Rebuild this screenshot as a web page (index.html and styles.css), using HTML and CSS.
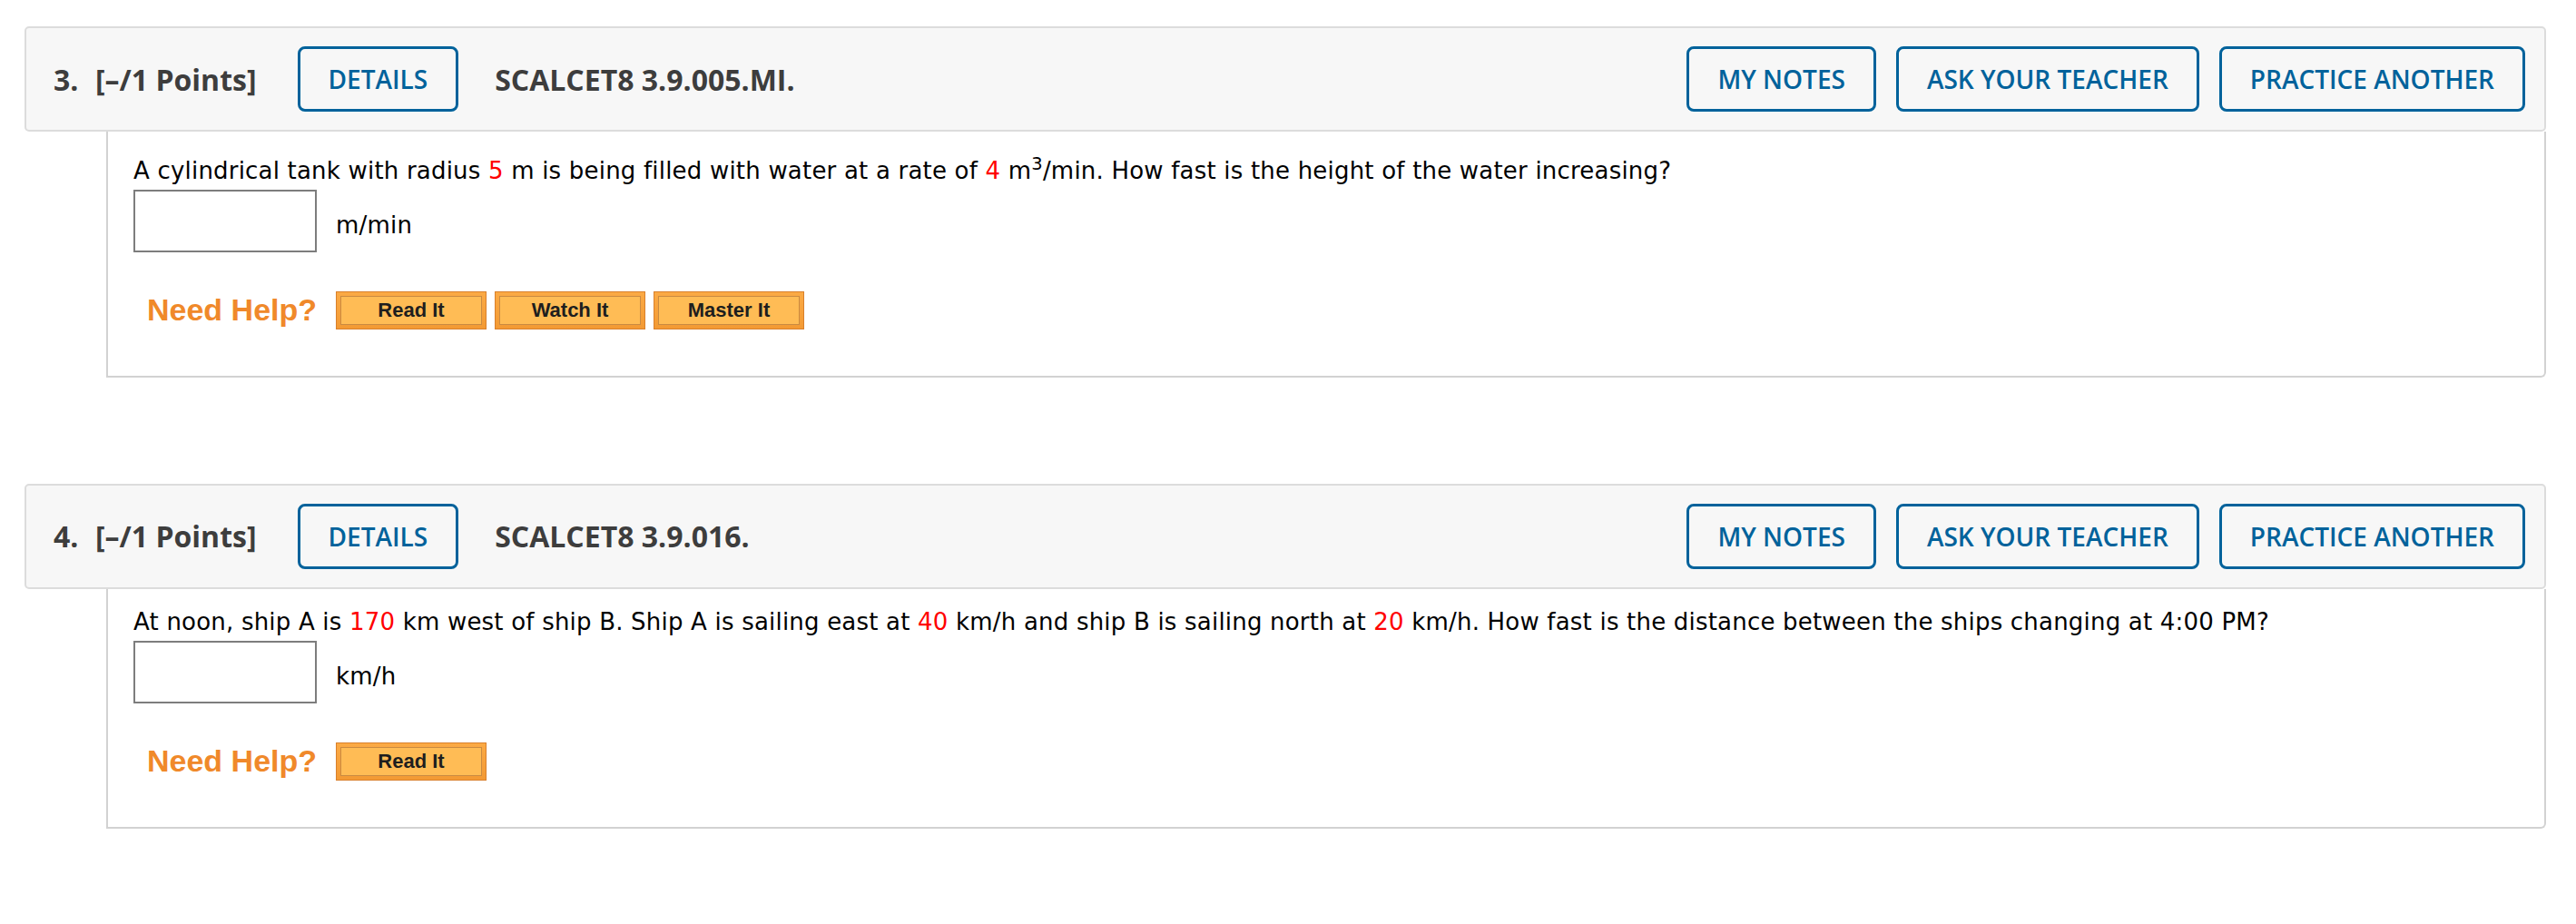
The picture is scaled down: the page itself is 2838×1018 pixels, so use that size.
FILE: index.html
```html
<!DOCTYPE html>
<html lang="en">
<head>
<meta charset="utf-8">
<title>Questions</title>
<link rel="stylesheet" href="styles.css">
</head>
<body>
<div class="page">
  <section class="question">
    <div class="qhead">
      <span class="qnum">3.</span>
      <span class="qpoints">[–/1 Points]</span>
      <button class="hbtn details">DETAILS</button>
      <span class="qcode">SCALCET8 3.9.005.MI.</span>
      <div class="hright">
        <button class="hbtn">MY NOTES</button>
        <button class="hbtn">ASK YOUR TEACHER</button>
        <button class="hbtn">PRACTICE ANOTHER</button>
      </div>
    </div>
    <div class="qbody">
      <p class="qtext">A cylindrical tank with radius <span class="red">5</span> m is being filled with water at a rate of <span class="red">4</span> m<sup>3</sup>/min. How fast is the height of the water increasing?</p>
      <div class="answer">
        <input class="ans" type="text">
        <span class="unit">m/min</span>
      </div>
      <div class="help">
        <span class="needhelp">Need Help?</span>
        <span class="hb"><span class="hbin">Read It</span></span>
        <span class="hb"><span class="hbin">Watch It</span></span>
        <span class="hb"><span class="hbin">Master It</span></span>
      </div>
    </div>
  </section>
  <section class="question">
    <div class="qhead">
      <span class="qnum">4.</span>
      <span class="qpoints">[–/1 Points]</span>
      <button class="hbtn details">DETAILS</button>
      <span class="qcode">SCALCET8 3.9.016.</span>
      <div class="hright">
        <button class="hbtn">MY NOTES</button>
        <button class="hbtn">ASK YOUR TEACHER</button>
        <button class="hbtn">PRACTICE ANOTHER</button>
      </div>
    </div>
    <div class="qbody">
      <p class="qtext">At noon, ship A is <span class="red">170</span> km west of ship B. Ship A is sailing east at <span class="red">40</span> km/h and ship B is sailing north at <span class="red">20</span> km/h. How fast is the distance between the ships changing at 4:00 PM?</p>
      <div class="answer">
        <input class="ans" type="text">
        <span class="unit">km/h</span>
      </div>
      <div class="help">
        <span class="needhelp">Need Help?</span>
        <span class="hb"><span class="hbin">Read It</span></span>
      </div>
    </div>
  </section>
</div>
</body>
</html>
```

FILE: styles.css
```css
* { box-sizing: border-box; }
html, body { margin: 0; padding: 0; background: #ffffff; }
.page { padding: 29px 33px 0 27px; }
.question { margin-bottom: 117px; }

.qhead {
  display: flex;
  align-items: center;
  height: 116px;
  background: #f7f7f7;
  border: 2px solid #dcdcdc;
  border-radius: 5px;
  padding: 0 21px 0 30px;
  font-family: "Open Sans", "DejaVu Sans", sans-serif;
  font-size: 32px;
  font-weight: 700;
  color: #3d3d3d;
}
.qnum { width: 46px; }
.qpoints { margin-right: 45px; }
.qcode { margin-left: 40px; }
.hright { margin-left: auto; display: flex; gap: 22px; }
.hbtn {
  height: 72px;
  padding: 0 31px;
  border: 3px solid #00629b;
  border-radius: 8px;
  background: transparent;
  color: #00629b;
  font-family: "Open Sans", "DejaVu Sans", sans-serif;
  font-size: 28px;
  font-weight: 600;
  line-height: 1;
}

.qbody {
  margin-left: 90px;
  border: 2px solid #d2d2d2;
  border-top: none;
  border-radius: 0 0 6px 0;
  padding: 19px 28px 51px 28px;
  font-family: "DejaVu Sans", Verdana, sans-serif;
  font-size: 26px;
  letter-spacing: 0.2px;
  color: #000000;
}
.qtext { margin: 0; line-height: 34px; }
.qtext sup { font-size: 0.75em; }
.red { color: #ff0000; }

.answer { display: flex; align-items: center; margin-top: 4px; }
.ans {
  width: 202px;
  height: 69px;
  border: 2px solid #7d7d7d;
  background: #ffffff;
  margin: 0;
}
.unit { margin-left: 21px; padding-top: 9px; line-height: 34px; }

.help { display: flex; align-items: center; margin-top: 43px; }
.needhelp {
  width: 223px;
  padding-left: 15px;
  font-family: "Liberation Sans", Arial, sans-serif;
  font-weight: 700;
  font-size: 34px;
  letter-spacing: 0;
  color: #f0892a;
}
.hb {
  display: flex;
  width: 166px;
  height: 42px;
  margin-right: 9px;
  padding: 4px;
  border: 1px solid #d9802c;
  background: linear-gradient(#fbaa45, #f39a34);
}
.hbin {
  flex: 1;
  display: flex;
  align-items: center;
  justify-content: center;
  border: 1px solid #c98a42;
  background: #ffbc55;
  font-family: "Liberation Sans", Arial, sans-serif;
  font-weight: 700;
  font-size: 22px;
  letter-spacing: 0;
  color: #1e1e1e;
}
```
